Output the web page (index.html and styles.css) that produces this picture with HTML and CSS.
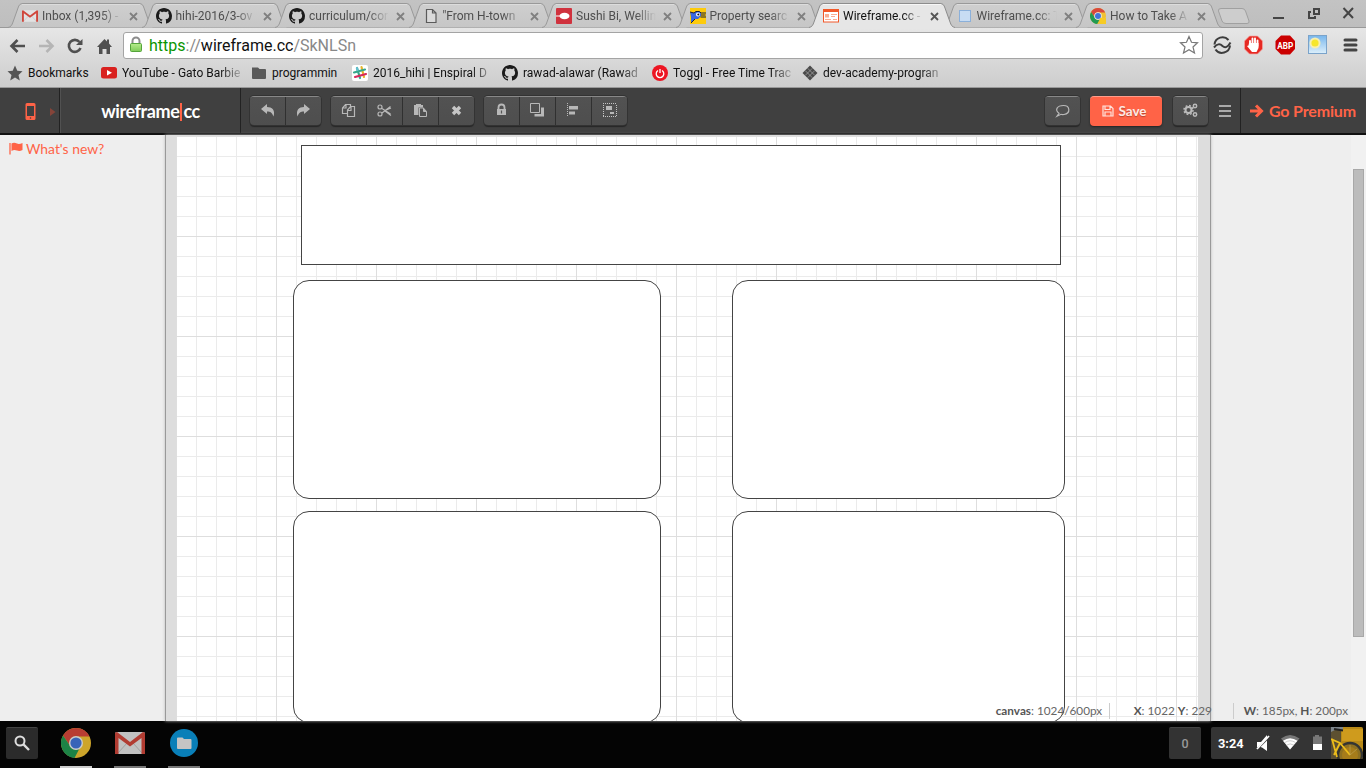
FILE: index.html
```html
<!DOCTYPE html>
<html lang="en">
<head>
<meta charset="utf-8">
<title>Wireframe.cc</title>
<link rel="stylesheet" href="styles.css">
</head>
<body>
<svg class="defs" aria-hidden="true">
  <defs>
    <linearGradient id="tabfill" x1="0" y1="0" x2="0" y2="1"><stop offset="0" stop-color="#cfcfcf"/><stop offset="1" stop-color="#c6c6c6"/></linearGradient>
    <linearGradient id="sky" x1="0" y1="0" x2="0" y2="1"><stop offset="0" stop-color="#78b6ec"/><stop offset="1" stop-color="#dceffb"/></linearGradient>
    <linearGradient id="lockfill" x1="0" y1="0" x2="0" y2="1"><stop offset="0" stop-color="#b6ec8c"/><stop offset="1" stop-color="#7ecb58"/></linearGradient>
    <symbol id="tab" viewBox="0 0 146 25"><path d="M0 24.5C3 24 4 22 5 19L10 5C11 2 12 .5 15 .5H131C134 .5 135 2 136 5L141 19C142 22 143 24 146 24.5" fill="url(#tabfill)" stroke="#999"/><path d="M14 1.5H132" stroke="#dcdcdc" fill="none"/></symbol>
    <symbol id="tab-on" viewBox="0 0 146 26"><path d="M0 24.5C3 24 4 22 5 19L10 5C11 2 12 .5 15 .5H131C134 .5 135 2 136 5L141 19C142 22 143 24 146 24.5V26H0Z" fill="#e6e6e6"/><path d="M0 24.5C3 24 4 22 5 19L10 5C11 2 12 .5 15 .5H131C134 .5 135 2 136 5L141 19C142 22 143 24 146 24.5" fill="none" stroke="#8c8c8c"/><path d="M14 1.5H132" stroke="#f6f6f6"/></symbol>
    <symbol id="x" viewBox="0 0 9 9"><path d="M1 1L8 8M8 1L1 8" stroke="currentColor" stroke-width="1.8"/></symbol>
    <symbol id="gh" viewBox="0 0 16 16"><path fill="#1b1b1b" d="M8 0C3.58 0 0 3.58 0 8c0 3.54 2.29 6.53 5.47 7.59.4.07.55-.17.55-.38 0-.19-.01-.82-.01-1.49-2.01.37-2.53-.49-2.69-.94-.09-.23-.48-.94-.82-1.13-.28-.15-.68-.52-.01-.53.63-.01 1.08.58 1.23.82.72 1.21 1.87.87 2.33.66.07-.52.28-.87.51-1.07-1.78-.2-3.64-.89-3.64-3.95 0-.87.31-1.59.82-2.15-.08-.2-.36-1.02.08-2.12 0 0 .67-.21 2.2.82.64-.18 1.32-.27 2-.27s1.36.09 2 .27c1.53-1.04 2.2-.82 2.2-.82.44 1.1.16 1.92.08 2.12.51.56.82 1.27.82 2.15 0 3.07-1.87 3.75-3.65 3.95.29.25.54.73.54 1.48 0 1.07-.01 1.93-.01 2.2 0 .21.15.46.55.38A8.01 8.01 0 0 0 16 8c0-4.42-3.58-8-8-8z"/></symbol>
    <symbol id="gmail" viewBox="0 0 30 22"><rect width="30" height="22" rx="1.5" fill="#e2e2e2"/><path d="M3 21L12 11M27 21L18 11" stroke="#bdbdbd"/><path d="M0 1.5Q0 0 2 0L15 10 28 0Q30 0 30 1.5V22H26.500V6L15 14.500 3.500 6V22H0Z" fill="#d0463b"/></symbol>
    <symbol id="chrome" viewBox="0 0 30 30"><circle cx="15" cy="15" r="15" fill="#f1c232"/><path d="M15 0A15 15 0 0 1 28.5 8.5H15A6.5 6.5 0 0 0 9.4 18.2L2 7.5A15 15 0 0 1 15 0Z" fill="#d8483c"/><path d="M2 7.5L9.4 18.2A6.5 6.5 0 0 0 18.5 20.5L13.5 30A15 15 0 0 1 2 7.5Z" fill="#229a52"/><circle cx="15" cy="15" r="7" fill="#eee"/><circle cx="15" cy="15" r="5.6" fill="#4274d8"/></symbol>
  </defs>
</svg>

<header class="browser">
  <div class="tabs">
    <div class="tab"><svg class="shape"><use href="#tab"/></svg><svg class="fav mail"><use href="#gmail"/></svg><span class="label">Inbox (1,395) -</span><svg class="close"><use href="#x"/></svg></div>
    <div class="tab"><svg class="shape"><use href="#tab"/></svg><svg class="fav"><use href="#gh"/></svg><span class="label">hihi-2016/3-ov</span><svg class="close"><use href="#x"/></svg></div>
    <div class="tab"><svg class="shape"><use href="#tab"/></svg><svg class="fav"><use href="#gh"/></svg><span class="label">curriculum/cor</span><svg class="close"><use href="#x"/></svg></div>
    <div class="tab"><svg class="shape"><use href="#tab"/></svg><svg class="fav" viewBox="0 0 16 16"><path d="M3.5 1.5H9.5L13 5V14.500H3.500ZM9.500 1.500V5H13" fill="#dadada" stroke="#5b5b5b" stroke-width="1.2"/></svg><span class="label">"From H-town</span><svg class="close"><use href="#x"/></svg></div>
    <div class="tab"><svg class="shape"><use href="#tab"/></svg><svg class="fav" viewBox="0 0 16 16"><rect width="16" height="16" rx="1" fill="#d0323e"/><path d="M0 8H5" stroke="#fff"/><ellipse cx="8.500" cy="8" rx="5" ry="3.200" fill="#fff"/></svg><span class="label">Sushi Bi, Wellin</span><svg class="close"><use href="#x"/></svg></div>
    <div class="tab"><svg class="shape"><use href="#tab"/></svg><svg class="fav" viewBox="0 0 16 16"><path fill="#fdcb0b" d="M0 0H16V16H0Z"/><path d="M0 4L4 5 6 3.500H9.500L11 5.500V8L8 11H5L1 14.500V9Z" fill="#3968df"/><path d="M0 4L4 5L6 3.500H9.500L11 5H16M11 7H15.500M10.500 9H16M5 11L1 15" fill="none" stroke="#182040"/><circle cx="8" cy="6.500" r="2" fill="#fff"/><circle cx="8.300" cy="6.500" r="1" fill="#111"/></svg><span class="label">Property searc</span><svg class="close"><use href="#x"/></svg></div>
    <div class="tab active"><svg class="shape"><use href="#tab-on"/></svg><svg class="fav" viewBox="0 0 16 16"><rect x=".5" y="1.500" width="15" height="12.500" fill="#fff" stroke="#f1592a"/><path d="M0 3H16" stroke="#f1592a" stroke-width="2"/><path d="M2 7H6M2 8.500H6" stroke="#f9ad92" stroke-width="2"/><path d="M8 6.500H14M8 8.500H12M2 11.500H8M10 11.500H14" stroke="#f9ad92"/></svg><span class="label">Wireframe.cc -</span><svg class="close"><use href="#x"/></svg></div>
    <div class="tab"><svg class="shape"><use href="#tab"/></svg><svg class="fav" viewBox="0 0 16 16"><rect x="2.500" y="2.500" width="11" height="11" fill="#c7dcf3" stroke="#8bb0da"/></svg><span class="label">Wireframe.cc: T</span><svg class="close"><use href="#x"/></svg></div>
    <div class="tab"><svg class="shape"><use href="#tab"/></svg><svg class="fav" viewBox="0 0 16 16"><use href="#chrome" width="16" height="16"/><path d="M10 10H16V16H10Z" fill="#f6cb24"/></svg><span class="label">How to Take A</span><svg class="close"><use href="#x"/></svg></div>
    <svg class="newtab" width="34" height="18"><path d="M4 .500H25Q27.500.500 28.500 3L32 13Q32.500 15.500 30 15.500H9Q6 15.500 5 13L1.500 3Q1 .500 4 .500Z" fill="#cdcdcd" stroke="#a0a0a0"/></svg>
    <svg class="winctl" width="90" height="24" fill="none" stroke="#454545" stroke-width="2"><path d="M0 15H11"/><path d="M41 6H46V11H41ZM38 9H36V15H42V13"/><path d="M70.500 5L80 15M80 5L70.500 15"/></svg>
  </div>

  <div class="navbar">
    <svg class="nav" width="112" height="30" fill="none" stroke="#505050" stroke-width="2.600"><path d="M25 15H12M17.500 9L11.500 15L17.500 21"/><path d="M39 15H52M46.500 9L52.500 15L46.500 21" stroke="#b5b5b5"/><path d="M79.500 11A6 6 0 1 0 80.500 17"/><path d="M82.500 8V14H76Z" fill="#505050" stroke="none"/><path d="M97 16L104.500 8L107 10.500V8.500H109V12.500L112 16H110V23H106.500V18H102.500V23H99V16Z" fill="#505050" stroke="none"/></svg>
    <div class="omnibox">
      <svg width="14" height="18"><path d="M3.500 8V5A3.500 3.500 0 0 1 10.500 5V8" fill="none" stroke="#8c8c8c" stroke-width="2"/><rect x="1.500" y="7.500" width="11" height="8" rx="1" fill="url(#lockfill)" stroke="#55a43b"/></svg>
      <span class="url"><b>https</b>://<i>wireframe.cc</i>/SkNLSn</span>
      <svg class="fave" width="20" height="20"><path d="M10 1.500L12.500 7.300L18.500 7.800L14 12L15.500 18L10 14.700L4.500 18L6 12L1.500 7.800L7.500 7.300Z" fill="#fff" stroke="#777" stroke-width="1.200"/></svg>
    </div>
    <svg class="ext" width="160" height="26"><g fill="none" stroke="#3d3d3d" stroke-width="2"><path d="M3.500 12.500A8 8 0 0 1 17.500 8"/><path d="M3 15.500Q7.500 10 11.500 14Q15.500 17.500 19.500 10.500"/><path d="M4.500 17.500A8 8 0 0 0 19 13.500"/></g><path d="M38.500 4H46.500L51.500 9V17L46.500 22H38.500L33.500 17V9Z" fill="#e62923" stroke="#f5a5a0" stroke-width=".7"/><path d="M39 14V9M41.500 13V6.500M44 13V6.500M46.500 14V8.500" stroke="#fff" stroke-width="1.900" stroke-linecap="round"/><path d="M38 11H47.500V16L45.500 20H41L36 14L37.500 13.500Z" fill="#fff"/><path d="M70 3.500H79L84 9V17L79 22.500H70L64.500 17V9Z" fill="#cb0000"/><text x="74.300" y="16.500" text-anchor="middle" textLength="16" lengthAdjust="spacingAndGlyphs" class="abp">ABP</text><rect x="97.500" y="3.500" width="18" height="18" fill="url(#sky)" stroke="#7aa3ca"/><circle cx="104" cy="11" r="5.500" fill="#f8eeb0"/><circle cx="104" cy="11" r="3.600" fill="#f6e62b"/><path d="M134 8H145M134 13H145M134 18H145" stroke="#444" stroke-width="3" stroke-linecap="round"/></svg>
  </div>

  <div class="bookmarks">
    <div class="bm b1"><svg viewBox="0 0 16 16"><path d="M8 .500L10.300 5.800L15.500 6.300L11.500 10L12.800 15.500L8 12.500L3.200 15.500L4.500 10L.500 6.300L5.700 5.800Z" fill="#555"/></svg><span>Bookmarks</span></div>
    <div class="bm b2 fade"><svg viewBox="0 0 16 16"><rect y="2" width="16" height="11.500" rx="2.500" fill="#d9211f"/><path d="M6 5L11 7.700L6 10.500Z" fill="#fff"/></svg><span>YouTube - Gato Barbie</span></div>
    <div class="bm b3"><svg viewBox="0 0 16 16"><path d="M1 2.500H7L8.500 4H14Q15 4 15 5V13Q15 14 14 14H2Q1 14 1 13Z" fill="#5a5a5a"/></svg><span>programmin</span></div>
    <div class="bm b4 fade"><svg viewBox="0 0 16 16"><rect width="16" height="16" rx="2" fill="#fff"/><g stroke-width="2.200" stroke-linecap="round"><path d="M5 3L8 13" stroke="#38a78b"/><path d="M9.500 2L12 12" stroke="#e8b52c"/><path d="M2 7.500L13 4.500" stroke="#38a78b"/><path d="M3 12L14 9" stroke="#d7295b"/><path d="M5 3L5.500 5" stroke="#62bed0"/></g></svg><span>2016_hihi | Enspiral D</span></div>
    <div class="bm b5 fade"><svg><use href="#gh"/></svg><span>rawad-alawar (Rawad</span></div>
    <div class="bm b6 fade"><svg viewBox="0 0 16 16"><circle cx="8" cy="8" r="8" fill="#ed1523"/><path d="M6 5.500A3.800 3.800 0 1 0 10 5.500M8 4V8" fill="none" stroke="#fff" stroke-width="1.300"/></svg><span>Toggl - Free Time Trac</span></div>
    <div class="bm b7 fade"><svg viewBox="0 0 16 16"><path d="M8 .500L15.500 8L8 15.500L.500 8Z" fill="#4a4a4a"/><path d="M5.700 3.300L12.700 10.300M3.300 5.700L10.300 12.700M10.300 3.300L3.300 10.300M12.700 5.700L5.700 12.700" stroke="#a7a7a7" stroke-width=".7"/></svg><span>dev-academy-progran</span></div>
  </div>
</header>

<nav class="appbar">
  <div class="device"><svg width="59" height="45"><path d="M27 15H34Q35.500 15 35.500 16.500V30.500Q35.500 32 34 32H27Q25.500 32 25.500 30.500V16.500Q25.500 15 27 15ZM27 18V28H34V18Z" fill="#ff6347" fill-rule="evenodd"/><circle cx="30.500" cy="30" r=".8" fill="#404040"/><path d="M50 20L55.500 24L50 28Z" fill="#854439"/></svg></div>
  <div class="brand">wireframe<i></i>cc</div>
  <div class="tools">
    <div class="group">
      <button><svg viewBox="0 0 35 29"><path d="M11 13L17 8V11C22 11 25.500 14 23.500 20.500C22 16.500 20.500 15.500 17 15.500V18Z"/></svg></button>
      <button><svg viewBox="0 0 35 29"><path d="M24 13L18 8V11C13 11 9.500 14 11.500 20.500C13 16.500 14.500 15.500 18 15.500V18Z"/></svg></button>
    </div>
    <div class="group">
      <button><svg viewBox="0 0 35 29" class="line"><path d="M16 17.500H11.500V12L14.500 8.500H19.500V11M11.500 12H15V8.500M16.500 14L19.500 10.500H23.500V20.500H16.500ZM16.500 14.500H20V10.500"/></svg></button>
      <button><svg viewBox="0 0 35 29" class="line"><circle cx="13" cy="11" r="2"/><circle cx="13" cy="18" r="2"/><path d="M15 12.500L23.500 18M15 17L23.500 10.500M18 14.500L24 12M18 15L24 19.500"/></svg></button>
      <button><svg viewBox="0 0 35 29"><path d="M11 9H13V8H18V9H20V11.500H15.500V19H11Z"/><path d="M16.500 12H20.500V15.500H23.500V20.500H16.500Z" fill="none" stroke="#b8b8b8"/><path d="M20.500 11.500L24 15.500H20.500Z"/></svg></button>
      <button><svg viewBox="0 0 35 29"><path d="M14 11L21 18M21 11L14 18" stroke="#c6c6c6" stroke-width="3.400" fill="none"/></svg></button>
    </div>
    <div class="group">
      <button><svg viewBox="0 0 35 29"><path d="M14.500 13V11.500A3 3 0 0 1 20.500 11.500V13" fill="none" stroke="#b8b8b8" stroke-width="1.800"/><path d="M13 13H22V19H13Z"/><path d="M17.500 14.500V17.500" stroke="#555" stroke-width="1.200"/></svg></button>
      <button><svg viewBox="0 0 35 29"><path d="M10.500 7.500H19.500V16.500H10.500Z" fill="none" stroke="#b8b8b8"/><path d="M21 11.500H24V20.500H14.500V18H21Z"/></svg></button>
      <button><svg viewBox="0 0 35 29"><path d="M11.500 7V21" stroke="#b8b8b8" stroke-dasharray="1 1"/><path d="M13 10H22V13.500H13ZM13 15.500H19V18.500H13Z"/></svg></button>
      <button><svg viewBox="0 0 35 29"><path d="M11 7.500H25M11 20.500H25M11.500 9V20M24.500 9V20" fill="none" stroke="#c4c4c4" stroke-dasharray="1 1"/><path d="M14 10H20V14H14ZM18 16H22V18H18Z"/></svg></button>
    </div>
  </div>
  <div class="actions">
    <div class="group"><button><svg viewBox="0 0 35 29" class="line"><path d="M18.500 9.500C25 9.500 26 17 19 18.500Q17 18.700 16 18.300L12 20.200L14 17.300C9.500 14 12 9.500 18.500 9.500Z"/></svg></button></div>
    <button class="save"><svg width="12" height="12" fill="none" stroke="#ffe3dd" stroke-width="1.200"><path d="M1 1H8.500L11 3.500V11H1ZM3 1V4.500H8V1M3 11V7H9V11"/></svg>Save</button>
    <div class="group gear"><button><svg viewBox="0 0 35 29"><g fill="none" stroke="#bbb"><circle cx="15.500" cy="14" r="3" stroke-width="2"/><circle cx="15.500" cy="14" r="4.500" stroke-width="1.500" stroke-dasharray="1.800 1.730"/><circle cx="22" cy="10" r="1.700" stroke-width="1.500"/><circle cx="22" cy="18.500" r="1.700" stroke-width="1.500"/></g></svg></button></div>
    <svg class="menu" width="12" height="12"><path d="M0 1H12M0 6H12M0 11H12" stroke="#aaa" stroke-width="2"/></svg>
  </div>
  <div class="premium"><svg width="14" height="14"><path d="M0 7H11M6 1.500L11.500 7L6 12.500" stroke="#ff6347" stroke-width="3" fill="none"/></svg>Go Premium</div>
</nav>

<main class="workspace">
  <aside class="left"><svg width="14" height="13"><path d="M1 1V12.500" stroke="#ff6347" stroke-width="1.300"/><path d="M2.500 1.500Q5 .200 8 1.500Q10 2.500 13.500 1V8Q10.500 9.500 8 8.500Q5 7.300 2.500 9Z" fill="#ff6347"/></svg>What's new?</aside>
  <section class="frame">
    <div class="canvas">
      <div class="box head"></div>
      <div class="box round r1 wide"></div>
      <div class="box round r1 slim"></div>
      <div class="box round r2 wide"></div>
      <div class="box round r2 slim"></div>
    </div>
  </section>
  <aside class="right"></aside>
  <div class="scroll"><div class="thumb"></div></div>
  <div class="status"><span class="s1"><b>canvas</b>: 1024/600px</span><span class="s2"><b>X</b>: 1022 <b>Y</b>: 229</span><span class="s3"><b>W</b>: 185px, <b>H</b>: 200px</span></div>
</main>

<footer class="shelf">
  <div class="tile"><svg width="32" height="32" fill="none" stroke="#ddd" stroke-width="2"><circle cx="14" cy="13" r="4.500"/><path d="M17.200 16.200L23 22" stroke-width="2.400"/></svg></div>
  <div class="app on"><svg width="30" height="30"><use href="#chrome"/></svg></div>
  <div class="app"><svg width="30" height="22"><use href="#gmail"/></svg></div>
  <div class="app"><svg width="28" height="28"><circle cx="14" cy="14" r="14" fill="#0a95d8"/><path d="M7 9.500Q7 8.500 8 8.500H12.500L14 10H20.500Q21.500 10 21.500 11V19Q21.500 20 20.500 20H8Q7 20 7 19Z" fill="#e6e6e6"/></svg></div>
  <div class="tile count">0</div>
  <div class="tray">
    <span>3:24</span>
    <svg width="88" height="32"><path d="M14 15H18L24 8V11L15 20H14ZM17.500 20L24 13.500V24L19 20.500Z" fill="#fff"/><path d="M14 22L26 9" stroke="#fff" stroke-width="1.800"/><path d="M38 11.500Q47 4.500 56.500 11.500L47 22.500Z" fill="#777"/><path d="M40 13.800Q47 8.500 54.500 13.800L47 22.500Z" fill="#fff"/><path d="M42 15.500Q47 12 52.500 15.500M43.500 18.200Q47 15.500 51 18.200" stroke="#aaa" stroke-width=".6" fill="none"/><path d="M70 9.500H72V8H76V9.500H79V17H70Z" fill="#777"/><path d="M70 17H79V23H70Z" fill="#fff"/></svg>
    <svg class="photo" width="32" height="32"><path fill="#b98a17" d="M0 0H32V32H0Z"/><path d="M11 2H32V14H11Z" fill="#cf9b1d"/><path d="M0 3H10V32H0Z" fill="#5d5031"/><path d="M0 0H12V3H4L0 5Z" fill="#7d858c"/><path d="M3 2L12 3.500" stroke="#222" stroke-width="2" fill="none"/><circle cx="19" cy="28" r="12" fill="#8e7020" stroke="#353532" stroke-width="2.500"/><circle cx="19" cy="28" r="8" fill="#a67c1a"/><path d="M0 12L9 16L19 28M3 28L9 16M1 12L6 30" stroke="#edbd1a" stroke-width="1.800" fill="none"/><path d="M19 28L26 22M19 28V18" stroke="#bca050" stroke-width=".7"/></svg>
  </div>
</footer>
</body>
</html>
```
FILE: styles.css
```css
* { box-sizing: border-box; }
body { margin: 0; width: 1366px; height: 768px; overflow: hidden; display: flex; flex-direction: column; font-family: Roboto, sans-serif; }
svg { display: block; flex: none; }
button { font: inherit; border: 0; padding: 0; margin: 0; }
.defs { position: absolute; width: 0; height: 0; }

/* browser chrome */
.browser { height: 88px; flex: none; background: linear-gradient(#e6e6e6 28px, #cdcdcd 87px); border-bottom: 1px solid #999; }
.tabs { display: flex; height: 28px; padding-left: 8px; background: linear-gradient(#c3c3c3, #bebebe); border-bottom: 1px solid #999; }
.tab { position: relative; width: 133.500px; flex: none; display: flex; align-items: center; height: 26px; padding: 6px 0 0 14px; color: #4e4e4e; font-size: 12px; }
.shape { position: absolute; left: 0; top: 3px; width: 146px; height: 25px; }
.active { z-index: 2; color: #111; }
.active .shape { height: 26px; }
.fav { position: relative; width: 16px; height: 16px; }
.mail { height: 12px; }
.label { position: relative; width: 87px; margin-left: 4px; white-space: nowrap; -webkit-mask-image: linear-gradient(90deg, #000 60px, transparent 80px); mask-image: linear-gradient(90deg, #000 60px, transparent 80px); }
.close { position: relative; width: 9px; height: 9px; color: #808080; }
.active .close { color: #555; }
.newtab { margin: 8px 0 0 7px; }
.winctl { margin: 3px 0 0 22px; }
.navbar { height: 32px; display: flex; align-items: center; padding-top: 2px; }
.nav { margin-top: 1px; }
.omnibox { width: 1080px; flex: none; height: 27px; margin-left: 11px; border: 1px solid #a4a4a4; border-radius: 3px; background: #fff; display: flex; align-items: center; padding: 0 3px 0 5px; }
.url { flex: 1; margin: 2px 0 0 6px; font-size: 16px; line-height: 24px; color: #888; }
.url b { font-weight: 400; color: #0a9500; }
.url i { font-style: normal; color: #111; }
.ext { margin-left: 8px; }
.abp { font: bold 9px Roboto, sans-serif; fill: #fff; }
.bookmarks { display: flex; height: 26px; align-items: center; padding-left: 7px; font-size: 12px; color: #111; }
.bm { display: flex; align-items: center; flex: none; }
.bm svg { width: 16px; height: 16px; }
.bm span { margin-left: 5px; white-space: nowrap; }
.fade span { -webkit-mask-image: linear-gradient(90deg, #000 98px, transparent 124px); mask-image: linear-gradient(90deg, #000 98px, transparent 124px); }
.b1 { width: 94px; }
.b2 { width: 150px; }
.b3 { width: 101px; }
.b4, .b5, .b6, .b7 { width: 150px; }
.b2 span, .b4 span, .b5 span, .b6 span, .b7 span { width: 124px; }

/* application bar */
.appbar { height: 47px; flex: none; display: flex; background: #404040; border-bottom: 2px solid #111; font-family: Lato, sans-serif; }
.device { width: 60px; border-right: 1px solid #222; }
.brand { width: 181px; border-left: 1px solid #515151; border-right: 1px solid #222; display: flex; align-items: center; justify-content: center; color: #fff; font-size: 18px; font-weight: 700; letter-spacing: -.4px; }
.brand i { width: 2px; height: 18px; margin: 2px 1px 0; background: #ff6347; }
.tools { display: flex; gap: 10px; padding: 8px 0 0 9px; flex: 1; }
.group { display: flex; gap: 1px; height: 29px; border-radius: 4px; background: #303030; overflow: hidden; box-shadow: 0 0 0 1px #333, 0 2px 1px #262626; border-top: 1px solid #888; }
.group button { width: 35px; height: 28px; background: linear-gradient(#525252, #4e4e4e); }
.group svg { width: 35px; height: 29px; margin-top: -1px; fill: #b8b8b8; }
.group .line { fill: none; stroke: #b8b8b8; stroke-width: 1.200; }
.actions { display: flex; align-items: flex-start; padding: 8px 9px 0 0; }
.save { width: 72px; height: 30px; margin: 0 11px 0 10px; padding: 0 3px 2px 0; border-radius: 4px; background: #ff6347; border-top: 1px solid #ff9d8b; box-shadow: 0 1px 2px #222; display: flex; align-items: center; justify-content: center; gap: 4px; color: #ffe9e4; font-size: 13.500px; font-weight: 700; text-shadow: 0 1px 1px #b9442f; }
.menu { margin: 9px 0 0 11px; }
.premium { width: 126px; border-left: 1px solid #222; padding-left: 9px; display: flex; align-items: center; gap: 5px; color: #ff6347; font-size: 16px; font-weight: 700; white-space: nowrap; letter-spacing: -.16px; }

/* drawing area */
.workspace { position: relative; height: 586px; flex: none; display: flex; background: #eee; font-family: Lato, sans-serif; }
.left { width: 165px; display: flex; gap: 3px; padding: 7px 0 0 9px; color: #ff6347; font-size: 13.900px; line-height: 13px; }
.frame { width: 1046px; border: solid #999; border-width: 0 1px; background: #ddd; padding: 1px 12px 0 10px; box-shadow: 0 0 3px #bbb; }
.canvas { position: relative; width: 1022px; height: 585px; overflow: hidden; background-color: #fff; background-image: linear-gradient(90deg, #dedede 1px, transparent 1px), linear-gradient(#dedede 1px, transparent 1px), linear-gradient(90deg, #ebebeb 1px, transparent 1px), linear-gradient(#ebebeb 1px, transparent 1px); background-size: 100px 100px, 100px 100px, 20px 20px, 20px 20px; }
.box { position: absolute; border: 1px solid #444; background: #fff; }
.head { left: 125px; top: 9px; width: 760px; height: 120px; }
.round { border-radius: 16px; }
.r1 { top: 144px; height: 219px; }
.r2 { top: 375px; height: 212px; }
.wide { left: 117px; width: 368px; }
.slim { left: 556px; width: 333px; }
.right { flex: 1; }
.scroll { width: 15px; background: #f1f1f1; padding: 34px 2px 0; }
.thumb { height: 468px; width: 11px; background: #bcbcbc; border: 1px solid #a8a8a8; }
.status { position: absolute; right: 18px; bottom: 2px; display: flex; line-height: 16px; font-size: 11.750px; color: #666; white-space: nowrap; }
.status b { color: #555; }
.s1 { width: 114px; border-right: 1px solid #ccc; margin-right: 24px; }
.s2 { width: 100px; border-right: 1px solid #ccc; margin-right: 10px; }

/* shelf */
.shelf { height: 47px; flex: none; background: #040404; display: flex; padding: 6px 3px 0 6px; }
.tile { width: 32px; height: 32px; background: #2b2b2b; border-top: 1px solid #444; border-radius: 2px; }
.app { width: 32px; height: 41px; margin-left: 22px; border-bottom: 2px solid #777; display: flex; justify-content: center; align-items: center; padding-bottom: 7px; }
.app svg { opacity: .85; }
.on { border-color: #ccc; }
.count { margin-left: auto; text-align: center; color: #999; font-size: 12.500px; line-height: 32px; font-weight: 500; background: #333; }
.tray { width: 152px; height: 32px; margin-left: 10px; display: flex; background: #343434; border-radius: 2px; color: #fff; overflow: hidden; }
.tray span { width: 32px; padding-left: 7px; font-size: 12.800px; font-weight: 700; line-height: 33px; }
```
